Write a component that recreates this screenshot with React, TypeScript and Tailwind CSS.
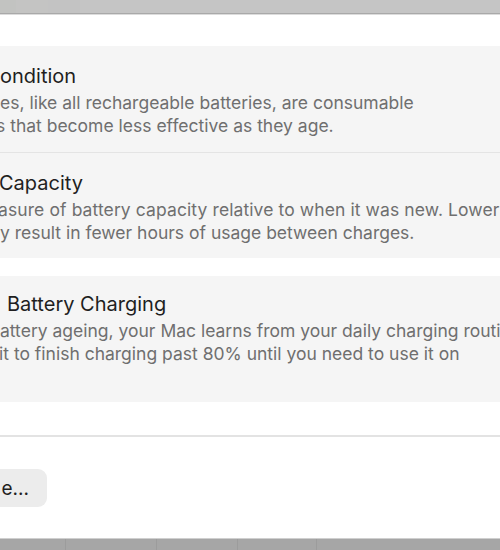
import React from "react";

export default function App() {
  const title = "text-[20px] leading-[24px] text-[#1f1f1f] whitespace-nowrap";
  const desc = "text-[17.5px] leading-[23px] text-[#6f6f6f] whitespace-nowrap";
  return (
    <div className="w-[500px] h-[550px] overflow-hidden bg-white flex flex-col font-['Inter',sans-serif]">
      <div className="h-[13px] bg-[#c5c5c5] flex shrink-0">
        <div className="w-[16px] bg-[#c2c3c1]" />
        <div className="w-[32px] bg-[#c4c4c3]" />
        <div className="w-[32px] bg-[#c3c3c3]" />
      </div>
      <div className="h-[1px] bg-[#a9a9a9] shrink-0" />
      <div className="h-[1px] bg-[#dcdcdc] shrink-0" />
      <div className="h-[31px] shrink-0" />

      <div className="bg-[#f5f5f5] shrink-0">
        <div className="pt-[18px] pb-[15px] h-[106px]">
          <div className={title}>ondition</div>
          <div className="mt-[3px]">
            <div className={desc}>es, like all rechargeable batteries, are consumable</div>
            <div className={desc + " -ml-[4px]"}>s that become less effective as they age.</div>
          </div>
        </div>
        <div className="h-[1px] bg-[#e4e4e4]" />
        <div className="pt-[18px] h-[105px]">
          <div className={title + " -ml-[1px]"}>Capacity</div>
          <div className="mt-[3px]">
            <div className={desc + " -ml-[2px] tracking-[0.1px]"}>asure of battery capacity relative to when it was new. Lower</div>
            <div className={desc}>y result in fewer hours of usage between charges.</div>
          </div>
        </div>
      </div>

      <div className="h-[18px] shrink-0" />

      <div className="bg-[#f5f5f5] h-[126px] pt-[16px] shrink-0">
        <div className={title + " pl-[7px]"}>Battery Charging</div>
        <div className="mt-[3px]">
          <div className={desc}>attery ageing, your Mac learns from your daily charging routine</div>
          <div className={desc + " -ml-[1px]"}>it to finish charging past 80% until you need to use it on</div>
        </div>
      </div>

      <div className="h-[33px] shrink-0" />
      <div className="h-[2px] bg-[#e3e3e3] shrink-0" />
      <div className="h-[32px] shrink-0" />

      <div className="flex shrink-0">
        <div className="h-[38px] w-[60px] -ml-[13px] rounded-[9px] bg-[#ececec] flex items-center justify-end pr-[18px]">
          <span className="text-[19px] text-[#1f1f1f] leading-none">e...</span>
        </div>
      </div>

      <div className="flex-1" />
      <div className="h-[1px] bg-[#cfcfcf] shrink-0" />
      <div className="h-[11px] bg-[#a6a6a6] flex shrink-0">
        <div className="w-[65px]" />
        <div className="w-[1px] bg-[#9c9c9c]" />
        <div className="w-[90px]" />
        <div className="w-[1px] bg-[#9c9c9c]" />
        <div className="w-[80px]" />
        <div className="w-[1px] bg-[#9c9c9c]" />
        <div className="w-[78px]" />
        <div className="w-[1px] bg-[#9c9c9c]" />
      </div>
    </div>
  );
}
